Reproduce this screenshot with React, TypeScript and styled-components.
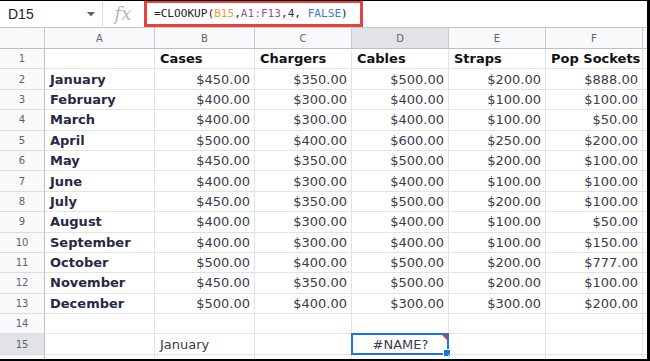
import React from "react";
import styled, { createGlobalStyle } from "styled-components";

const Global = createGlobalStyle`
  html, body { margin: 0; padding: 0; background: #fff; }
  body { width: 650px; height: 361px; overflow: hidden; }
`;

const Frame = styled.div`
  box-sizing: border-box;
  width: 650px;
  height: 361px;
  border-top: 1px solid #000;
  border-right: 3px solid #000;
  border-bottom: 2px solid #000;
  overflow: hidden;
  display: flex;
  flex-direction: column;
  font-family: "DejaVu Sans", Verdana, sans-serif;
  background: #fff;
`;

const FormulaBar = styled.div`
  height: 26px;
  flex: none;
  display: flex;
  align-items: center;
  border-bottom: 1px solid #c7c7c7;
  position: relative;
`;

const NameBox = styled.div`
  width: 103px;
  height: 100%;
  box-sizing: border-box;
  display: flex;
  align-items: center;
  justify-content: space-between;
  padding: 0 7px 0 8px;
  font-family: "Liberation Sans", Arial, sans-serif;
  font-size: 14px;
  color: #222;
  border-right: 1px solid #dadce0;
`;

const Fx = styled.div`
  width: 40px;
  height: 100%;
  display: flex;
  align-items: center;
  justify-content: center;
  font-family: "DejaVu Serif", "Liberation Serif", serif;
  font-style: italic;
  font-size: 18px;
  color: #b4b7bb;
  margin-right: 1px;
  padding-bottom: 2px;
  box-sizing: border-box;
`;

const FormulaBox = styled.div`
  box-sizing: border-box;
  width: 219px;
  height: 27px;
  margin-top: -1px;
  border: 3px solid #e8423d;
  display: flex;
  align-items: center;
  padding-left: 7px;
  font-family: "DejaVu Sans Mono", "Liberation Mono", monospace;
  font-size: 11.1px;
  color: #222;
  white-space: pre;
`;

const Tok = styled.span<{ $c: string }>`
  color: ${(p) => p.$c};
`;

const Grid = styled.div`
  display: grid;
  grid-template-columns: 45px 110px 100px 97px 97px 97px 97px 1fr;
  grid-template-rows: 21px repeat(16, 20.4px);
  flex: none;
`;

const ColHead = styled.div<{ $sel?: boolean }>`
  box-sizing: border-box;
  background: ${(p) => (p.$sel ? "#e1e3e6" : "#f8f9fa")};
  border-right: 1px solid #c9ccce;
  border-bottom: 1px solid #c0c0c0;
  display: flex;
  align-items: center;
  justify-content: center;
  font-size: 10px;
  color: #5f6368;
`;

const RowHead = styled.div<{ $sel?: boolean }>`
  box-sizing: border-box;
  background: ${(p) => (p.$sel ? "#e1e3e6" : "#f8f9fa")};
  border-right: 1px solid #c0c0c0;
  border-bottom: 1px solid #dadcdd;
  display: flex;
  align-items: center;
  justify-content: center;
  font-size: 10px;
  color: #5f6368;
`;

const Cell = styled.div<{ $align?: "left" | "right" | "center"; $kind?: "head" | "month" | "num" | "plain" }>`
  box-sizing: border-box;
  position: relative;
  border-right: 1px solid #e2e3e3;
  border-bottom: 1px solid #e2e3e3;
  display: flex;
  align-items: center;
  justify-content: ${(p) =>
    p.$align === "right" ? "flex-end" : p.$align === "center" ? "center" : "flex-start"};
  padding: 0 4px 0 5px;
  white-space: nowrap;
  overflow: visible;
  font-size: 13px;
  font-weight: ${(p) => (p.$kind === "head" || p.$kind === "month" ? 700 : 400)};
  color: ${(p) =>
    p.$kind === "head" ? "#111" : p.$kind === "month" ? "#262944" : "#3a3b4c"};
`;

const Selection = styled.div`
  position: absolute;
  left: -1px;
  top: -1px;
  right: -1px;
  bottom: -1px;
  border: 2px solid #1a73e8;
  pointer-events: none;
`;

const Handle = styled.div`
  position: absolute;
  right: -4px;
  bottom: -4px;
  width: 6px;
  height: 6px;
  background: #1a73e8;
  border: 1px solid #fff;
`;

const ErrFlag = styled.div`
  position: absolute;
  right: 0;
  top: 0;
  width: 0;
  height: 0;
  border-top: 5px solid #e53935;
  border-left: 5px solid transparent;
`;

const heads = ["", "Cases", "Chargers", "Cables", "Straps", "Pop Sockets"];
const data: [string, number[]][] = [
  ["January", [450, 350, 500, 200, 888]],
  ["February", [400, 300, 400, 100, 100]],
  ["March", [400, 300, 400, 100, 50]],
  ["April", [500, 400, 600, 250, 200]],
  ["May", [450, 350, 500, 200, 100]],
  ["June", [400, 300, 400, 100, 100]],
  ["July", [450, 350, 500, 200, 100]],
  ["August", [400, 300, 400, 100, 50]],
  ["September", [400, 300, 400, 100, 150]],
  ["October", [500, 400, 500, 200, 777]],
  ["November", [450, 350, 500, 200, 100]],
  ["December", [500, 400, 300, 300, 200]],
];

const money = (n: number) => `$${n.toFixed(2)}`;

export default function App() {
  const cols = ["A", "B", "C", "D", "E", "F", ""];
  return (
    <>
      <Global />
      <Frame>
        <FormulaBar>
          <NameBox>
            <span>D15</span>
            <svg width="8" height="5" viewBox="0 0 8 5">
              <path d="M0 0 L8 0 L4 4.5 Z" fill="#5f6368" />
            </svg>
          </NameBox>
          <Fx>fx</Fx>
          <FormulaBox>
            <Tok $c="#222">=CLOOKUP(</Tok>
            <Tok $c="#ef9a3a">B15</Tok>
            <Tok $c="#222">,</Tok>
            <Tok $c="#9c4ea8">A1:F13</Tok>
            <Tok $c="#222">,</Tok>
            <Tok $c="#27305a">4</Tok>
            <Tok $c="#222">, </Tok>
            <Tok $c="#3c78d8">FALSE</Tok>
            <Tok $c="#222">)</Tok>
          </FormulaBox>
        </FormulaBar>
        <Grid>
          <ColHead />
          {cols.map((c, i) => (
            <ColHead key={i} $sel={c === "D"}>
              {c}
            </ColHead>
          ))}
          <RowHead>1</RowHead>
          {heads.map((h, i) => (
            <Cell key={i} $kind="head">
              {h}
            </Cell>
          ))}
          <Cell />
          {data.map(([m, vals], r) => (
            <React.Fragment key={m}>
              <RowHead>{r + 2}</RowHead>
              <Cell $kind="month">{m}</Cell>
              {vals.map((v, j) => (
                <Cell key={j} $align="right" $kind="num">
                  {money(v)}
                </Cell>
              ))}
              <Cell />
            </React.Fragment>
          ))}
          <RowHead>14</RowHead>
          {cols.map((_, i) => (
            <Cell key={i} />
          ))}
          <RowHead $sel>15</RowHead>
          <Cell />
          <Cell $kind="plain">January</Cell>
          <Cell />
          <Cell $align="center" $kind="plain">
            #NAME?
            <Selection>
              <ErrFlag />
              <Handle />
            </Selection>
          </Cell>
          <Cell />
          <Cell />
          <Cell />
          <RowHead>16</RowHead>
          {cols.map((_, i) => (
            <Cell key={i} />
          ))}
        </Grid>
      </Frame>
    </>
  );
}
